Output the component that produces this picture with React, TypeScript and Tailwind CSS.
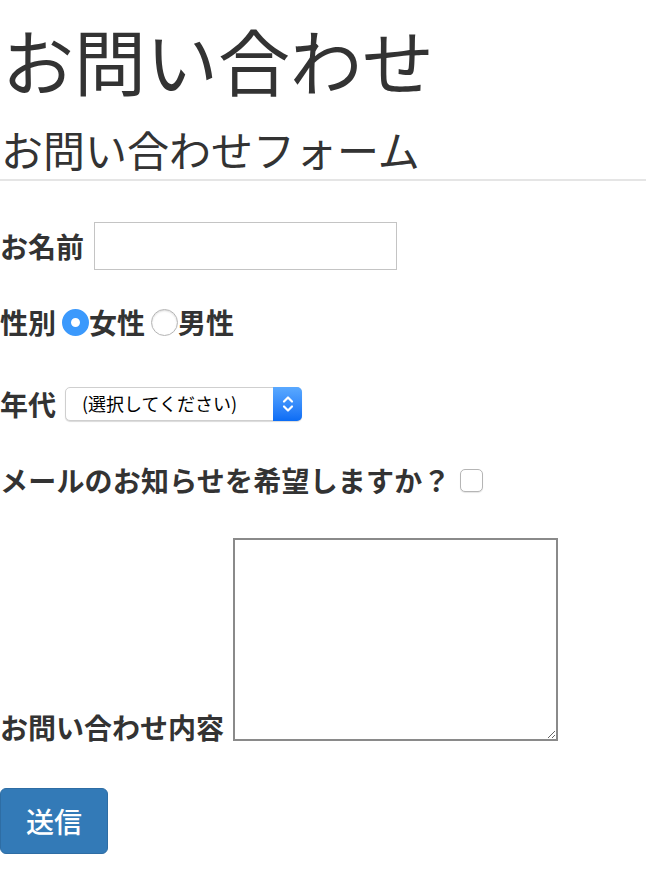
import { useState } from "react";

const jp = "font-['Noto_Sans_CJK_JP','Noto_Sans',sans-serif]";

export default function App() {
  const [gender, setGender] = useState("female");
  const [mail, setMail] = useState(false);

  return (
    <div className={`min-h-screen bg-white text-[#333] ${jp}`}>
      <h1 className="mt-[19px] pl-[2px] text-[72px] leading-[80px] font-normal">
        お問い合わせ
      </h1>
      <h2 className="mt-[27px] pl-[1px] text-[42px] leading-[46px] font-normal">
        お問い合わせフォーム
      </h2>
      <div className="mt-[7px] h-[2px] w-full bg-[#e5e5e5]" />

      <form className="flex flex-col" onSubmit={(e) => e.preventDefault()}>
        <div className="mt-[41px] flex h-[48px] items-center">
          <label className="text-[28px] leading-none font-bold">お名前</label>
          <input
            type="text"
            className="ml-[10px] h-[48px] w-[303px] border border-[#c4c4c4] bg-white px-2 text-[20px] outline-none"
          />
        </div>

        <div className="mt-[32px] flex h-[40px] items-center text-[28px] leading-none font-bold">
          <span>性別</span>
          <label className="ml-[6px] flex items-center">
            <input
              type="radio"
              name="gender"
              checked={gender === "female"}
              onChange={() => setGender("female")}
              className="h-[27px] w-[27px] appearance-none rounded-full border-[9px] border-[#3b99fc] bg-white"
            />
            <span>女性</span>
          </label>
          <label className="ml-[6px] flex items-center">
            <input
              type="radio"
              name="gender"
              checked={gender === "male"}
              onChange={() => setGender("male")}
              className="h-[27px] w-[27px] appearance-none rounded-full border border-[#b5b5b5] bg-white shadow-[inset_0_1px_2px_rgba(0,0,0,0.15)]"
            />
            <span>男性</span>
          </label>
        </div>

        <div className="mt-[44px] flex h-[35px] items-center">
          <label className="text-[28px] leading-none font-bold">年代</label>
          <div className="relative ml-[9px] h-[34px] w-[237px]">
            <select className="h-full w-full appearance-none rounded-[5px] border border-[#cfcfcf] bg-white pl-[16px] text-[18px] text-black shadow-[0_1px_1px_rgba(0,0,0,0.15)] outline-none">
              <option>(選択してください)</option>
              <option>10代</option>
              <option>20代</option>
              <option>30代</option>
              <option>40代</option>
              <option>50代以上</option>
            </select>
            <div className="pointer-events-none absolute top-0 right-0 flex h-[34px] w-[29px] items-center justify-center rounded-r-[5px] bg-gradient-to-b from-[#5aa9ff] to-[#0a6cf5]">
              <svg width="14" height="22" viewBox="0 0 14 22" fill="none" stroke="white" strokeWidth="2.2" strokeLinecap="round" strokeLinejoin="round">
                <path d="M3 8.5 L7 4.5 L11 8.5" />
                <path d="M3 13.5 L7 17.5 L11 13.5" />
              </svg>
            </div>
          </div>
        </div>

        <div className="mt-[39px] flex h-[40px] items-center">
          <label className="text-[28px] leading-none font-bold tracking-[0.2px]">
            メールのお知らせを希望しますか？
          </label>
          <input
            type="checkbox"
            checked={mail}
            onChange={(e) => setMail(e.target.checked)}
            className="ml-[9px] h-[23px] w-[23px] appearance-none rounded-[5px] border border-[#b5b5b5] bg-white shadow-[0_1px_1px_rgba(0,0,0,0.1)] checked:bg-[#3b99fc]"
          />
        </div>

        <div className="mt-[38px] flex items-end">
          <label className="text-[28px] leading-[28px] font-bold">お問い合わせ内容</label>
          <textarea className="ml-[9px] h-[203px] w-[325px] border-2 border-[#8a8a8a] bg-white p-1 text-[18px] outline-none" />
        </div>

        <div className="mt-[47px]">
          <button
            type="submit"
            className="h-[66px] w-[108px] rounded-[6px] border border-[#2e6da4] bg-[#337ab7] text-[28px] leading-none font-medium text-white"
          >
            送信
          </button>
        </div>
      </form>
    </div>
  );
}
